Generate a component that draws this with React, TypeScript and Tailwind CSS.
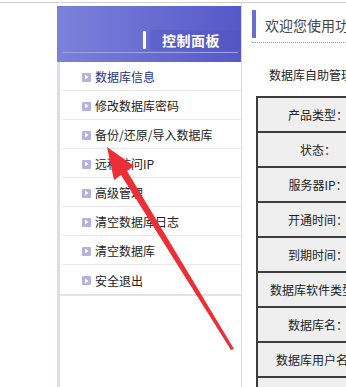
import React from "react"

const menu = [
  "数据库信息",
  "修改数据库密码",
  "备份/还原/导入数据库",
  "远程访问IP",
  "高级管理",
  "清空数据库日志",
  "清空数据库",
  "安全退出",
]

const rows = [
  "产品类型：",
  "状态：",
  "服务器IP：",
  "开通时间：",
  "到期时间：",
  "数据库软件类型：",
  "数据库名：",
  "数据库用户名：",
  "数据库密码：",
]

function PlayIcon() {
  return (
    <span className="flex h-[9px] w-[9px] shrink-0 items-center justify-center rounded-[1px] bg-[#b3b3de]">
      <svg width="5" height="6" viewBox="0 0 5 6">
        <path d="M1 0.5 L4.5 3 L1 5.5 Z" fill="#fff" />
      </svg>
    </span>
  )
}

function Arrow() {
  // red annotation arrow pointing at the backup item
  return (
    <svg className="pointer-events-none absolute inset-0" width="346" height="387" viewBox="0 0 346 387">
      <path d="M107 147 L134 166 L127 171 L234 349 L231 350 L121 175 L114 180 Z" fill="#ec2f36" />
    </svg>
  )
}

export default function App() {
  return (
    <div
      className="relative h-[387px] w-[346px] overflow-hidden bg-white text-[12px] text-[#222]"
      style={{ fontFamily: '"Noto Sans CJK SC", "Noto Sans", sans-serif' }}
    >
      <div className="pt-[2px]">
        <div className="border-t border-[#cfcfcf]" />
      </div>
      <div className="flex h-[384px]">
        <div className="ml-[57px] flex w-[185px] shrink-0 flex-col border-r border-[#dcdcdc] pt-[3px]">
          <div className="flex h-[56px] flex-col bg-gradient-to-r from-[#7c81db] to-[#5658c7] pt-[24px]">
            <div className="flex h-[20px] items-center pl-[86px]">
              <span className="h-[18px] w-[3px] rounded-[1px] bg-white" />
              <span className="ml-[4px] flex h-full flex-1 items-center bg-[#5052c2]/40 pl-[12px] text-[14px] font-bold tracking-[0.5px] text-white">
                控制面板
              </span>
            </div>
            <div className="ml-[5px] mr-[3px] mt-[2px] border-t border-[#9ea2e6]" />
          </div>
          <div className="flex flex-1 flex-col border-l-[3px] border-[#dcdcef]">
            <div className="border-b-2 border-[#e3e3e3]">
              {menu.map((m, i) => (
                <div
                  key={m}
                  className={
                    "ml-[2px] flex h-[29px] items-center gap-[4px] pl-[20px] pt-[2px] " +
                    (i < menu.length - 1 ? "border-b border-[#e8e8e8]" : "")
                  }
                >
                  <PlayIcon />
                  <span className={i === 0 ? "text-[#1f2e8c]" : "text-[#222]"}>{m}</span>
                </div>
              ))}
            </div>
          </div>
        </div>
        <div className="min-w-0 flex-1 pl-[10px] pt-[7px]">
          <div className="flex h-[28px] items-center border-l-4 border-[#6b6dcc] pl-[9px] pt-[3px]">
            <span className="whitespace-nowrap text-[14px] text-[#444]">欢迎您使用功能管理系统</span>
          </div>
          <div className="mt-[4px] border-b border-dotted border-[#999]" />
          <div className="mt-[23px] pl-[17px] whitespace-nowrap text-[#222]">数据库自助管理平台</div>
          <div className="ml-[4px] mt-[12px]">
            <table className="border-collapse">
              <tbody>
                {rows.map((r) => (
                  <tr key={r}>
                    <td className="h-[35px] w-[122px] min-w-[122px] whitespace-nowrap border-2 border-[#3d3d3d] bg-[#efefef] pt-[1px] text-center text-[12px] text-[#222]">
                      {r}
                    </td>
                  </tr>
                ))}
              </tbody>
            </table>
          </div>
        </div>
      </div>
      <Arrow />
    </div>
  )
}
